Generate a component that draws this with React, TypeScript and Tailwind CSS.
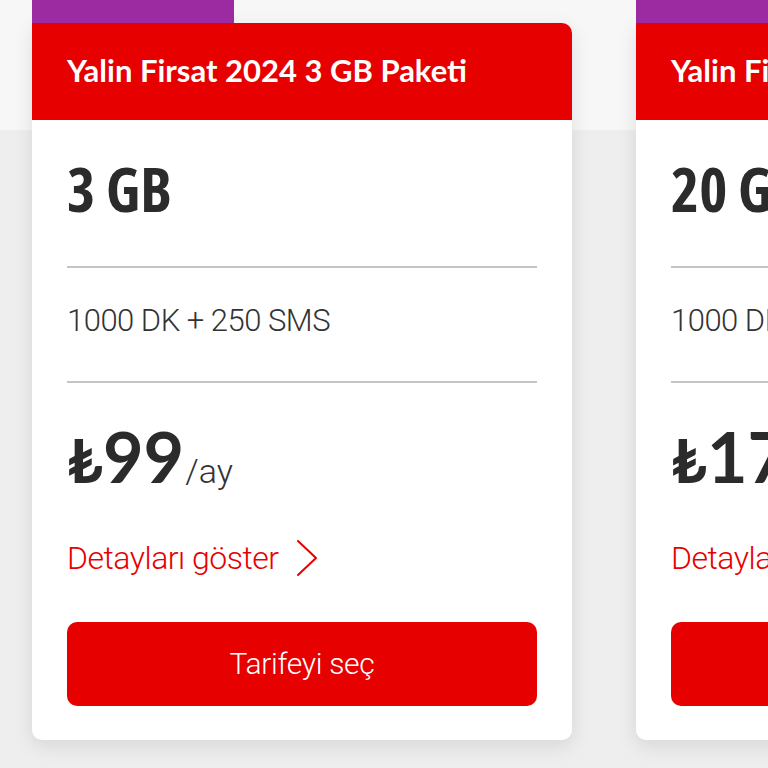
import React from "react";

type Plan = {
  tab: string;
  tabWidth: string;
  title: string;
  data: string;
  features: string;
  price: string;
};

const plans: Plan[] = [
  {
    tab: "Yalnızca Online",
    tabWidth: "w-[202px]",
    title: "Yalin Firsat 2024 3 GB Paketi",
    data: "3 GB",
    features: "1000 DK + 250 SMS",
    price: "99",
  },
  {
    tab: "Yalnızca Online",
    tabWidth: "w-[202px]",
    title: "Yalin Firsat 2024 20 GB Paketi",
    data: "20 GB",
    features: "1000 DK + 250 SMS",
    price: "179",
  },
];

function Card({ plan }: { plan: Plan }) {
  return (
    <div className="flex w-[540px] shrink-0 flex-col">
      <div
        className={`relative h-[23px] ${plan.tabWidth} overflow-hidden bg-[#9c2aa0]`}
      >
        <span className="absolute bottom-[20px] left-[30px] whitespace-nowrap text-[28px] font-bold leading-none text-white">
          {plan.tab}
        </span>
      </div>
      <div className="flex flex-col rounded-tr-[10px] rounded-b-[10px] bg-white shadow-[0_6px_20px_rgba(0,0,0,0.10)]">
        <div className="flex h-[97px] items-center rounded-tr-[10px] bg-[#e60000] px-[35px]">
          <h2 className="-mt-[2px] whitespace-nowrap text-[31px] font-bold leading-none text-white">
            {plan.title}
          </h2>
        </div>
        <div className="flex flex-col px-[35px] pt-[39px] pb-[34px]">
          <div className="whitespace-nowrap font-['Open_Sans',sans-serif] text-[60px] font-bold leading-none text-[#2b2b2b] font-stretch-semi-condensed">
            {plan.data}
          </div>
          <div className="mt-[47px] h-[2px] bg-[#c4c4c4]" />
          <div className="mt-[37px] whitespace-nowrap font-['Roboto',sans-serif] text-[31px] font-light leading-none tracking-[-0.5px] text-[#333333]">
            {plan.features}
          </div>
          <div className="mt-[45px] h-[2px] bg-[#c4c4c4]" />
          <div className="mt-[38px] flex items-baseline whitespace-nowrap leading-none text-[#2b2b2b]">
            <span className="text-[62px] font-bold leading-none">₺</span>
            <span className="text-[70px] font-bold leading-none">
              {plan.price}
            </span>
            <span className="ml-[1px] font-['Roboto',sans-serif] text-[34px] font-light leading-none text-[#333333]">
              /ay
            </span>
          </div>
          <div className="mt-[48px] flex items-center gap-[16px] whitespace-nowrap font-['Roboto',sans-serif] text-[32px] font-light leading-none tracking-[-0.5px] text-[#e60000]">
            <span>Detayları göster</span>
            <svg
              width="24"
              height="38"
              viewBox="0 0 24 38"
              fill="none"
              stroke="#e60000"
              strokeWidth="2"
              strokeLinecap="round"
              strokeLinejoin="round"
            >
              <path d="M3 2 L21 19 L3 36" />
            </svg>
          </div>
          <button className="mt-[45px] flex h-[84px] items-center justify-center rounded-[10px] bg-[#e60000] font-['Roboto',sans-serif] text-[30px] font-light leading-none tracking-[-0.3px] text-white">
            Tarifeyi seç
          </button>
        </div>
      </div>
    </div>
  );
}

export default function App() {
  return (
    <div className="h-[768px] w-[768px] overflow-hidden bg-[linear-gradient(to_bottom,#f7f7f7_0px,#f7f7f7_130px,#eeeeee_130px,#eeeeee_100%)] font-['Lato','Open_Sans','DejaVu_Sans',sans-serif]">
      <div className="flex gap-[64px] pl-[32px]">
        {plans.map((p) => (
          <Card key={p.title} plan={p} />
        ))}
      </div>
    </div>
  );
}
